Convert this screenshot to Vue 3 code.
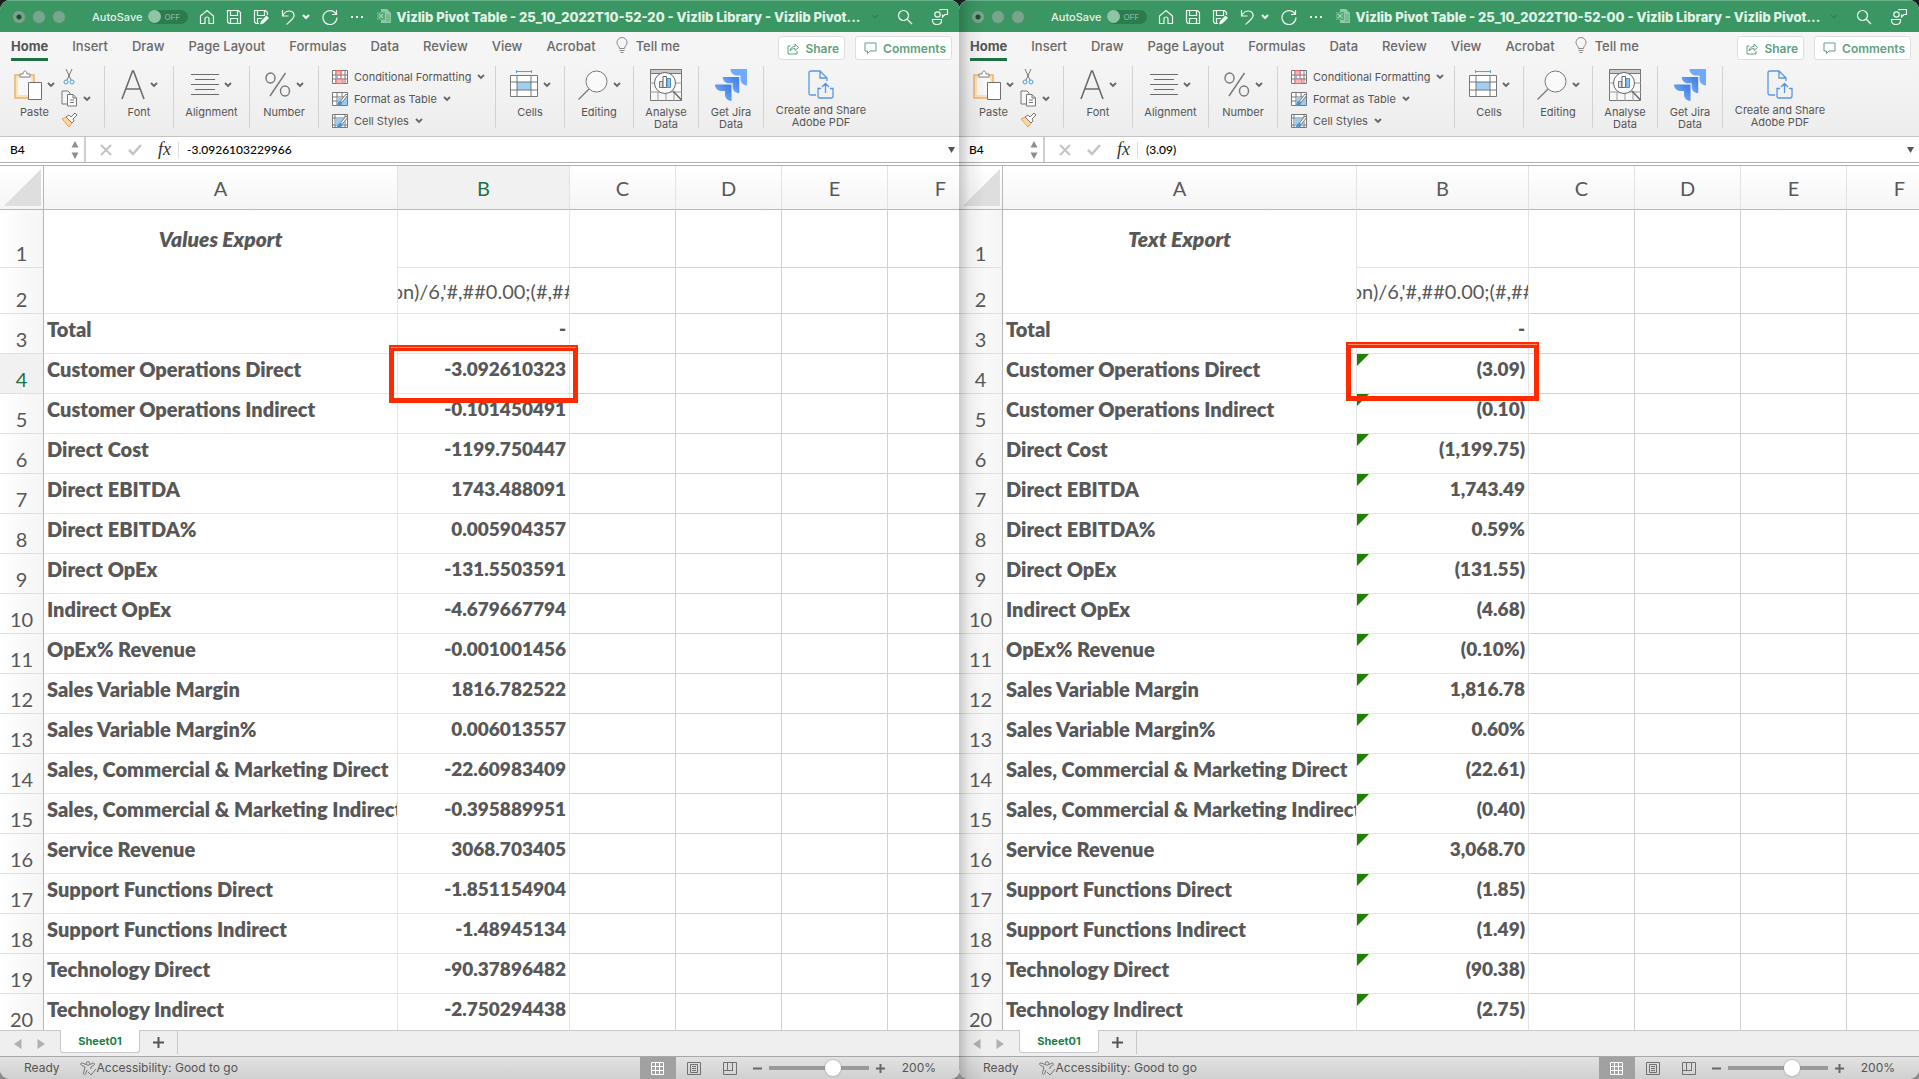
<script setup>
import { ref } from 'vue'

const tabs = ['Home', 'Insert', 'Draw', 'Page Layout', 'Formulas', 'Data', 'Review', 'View', 'Acrobat']
const extraColumns = ['C', 'D', 'E', 'F']

const labels = [
    'Total',
    'Customer Operations Direct',
    'Customer Operations Indirect',
    'Direct Cost',
    'Direct EBITDA',
    'Direct EBITDA%',
    'Direct OpEx',
    'Indirect OpEx',
    'OpEx% Revenue',
    'Sales Variable Margin',
    'Sales Variable Margin%',
    'Sales, Commercial & Marketing Direct',
    'Sales, Commercial & Marketing Indirect',
    'Service Revenue',
    'Support Functions Direct',
    'Support Functions Indirect',
    'Technology Direct',
    'Technology Indirect'
]

const books = ref([
    {
        id: 'values',
        title: 'Vizlib Pivot Table - 25_10_2022T10-52-20 - Vizlib Library - Vizlib Pivot...',
        heading: 'Values Export',
        formula: '-3.0926103229966',
        cell: 'B4',
        zoom: 67,
        active: true,
        values: ['-', '-3.092610323', '-0.101450491', '-1199.750447', '1743.488091', '0.005904357', '-131.5503591', '-4.679667794', '-0.001001456', '1816.782522', '0.006013557', '-22.60983409', '-0.395889951', '3068.703405', '-1.851154904', '-1.48945134', '-90.37896482', '-2.750294438']
    },
    {
        id: 'text',
        title: 'Vizlib Pivot Table - 25_10_2022T10-52-00 - Vizlib Library - Vizlib Pivot...',
        heading: 'Text Export',
        formula: '(3.09)',
        cell: 'B4',
        zoom: 67,
        active: false,
        values: ['-', '(3.09)', '(0.10)', '(1,199.75)', '1,743.49', '0.59%', '(131.55)', '(4.68)', '(0.10%)', '1,816.78', '0.60%', '(22.61)', '(0.40)', '3,068.70', '(1.85)', '(1.49)', '(90.38)', '(2.75)']
    }
])
</script>

<template>
    <main class="desktop">
        <section v-for="book in books" :key="book.id" :class="['window', book.id]">
            <header class="titlebar">
                <div class="lights"><i class="dot"></i><i></i><i></i></div>
                <button class="autosave">AutoSave <span class="toggle"><b></b>OFF</span></button>
                <div class="quick">
                    <button aria-label="Home">
                        <svg width="16" height="16" viewBox="0 0 16 16"><path d="M1.5 7 8 1.5 14.500 7V14.500H10V10a2 2 0 0 0-4 0v4.500H1.500Z" /></svg>
                    </button>
                    <button aria-label="Save">
                        <svg width="16" height="16" viewBox="0 0 16 16"><path d="M1.500 1.500H12.500L14.500 3.500V14.500H3L1.500 13ZM4.500 1.500V6.500H11.500V1.500M4.500 14.500V9.500H11.500V14.500" /></svg>
                    </button>
                    <button aria-label="Save as">
                        <svg width="16" height="16" viewBox="0 0 16 16"><path d="M6 14.500H3L1.500 13V1.500H12.500L14.500 3.500V6M4.500 1.500V6.500H11.500V1.500M4.500 14V9.500H9" /><path class="solid" d="M7 15.500 8 12 13.500 6.500 16 9 10.500 14.500Z" /></svg>
                    </button>
                    <button class="undo" aria-label="Undo">
                        <svg width="16" height="16" viewBox="0 0 16 16"><path d="M2.500 1V7H8.500M2.500 6.800C4 4 6.500 2 9.500 2 13 2 14.800 5 13.800 7.800 13 10 10 12.500 6.500 15.500" /></svg>
                        <svg width="8" height="6" viewBox="0 0 8 6"><path class="thick" d="M1 1 4 4 7 1" /></svg>
                    </button>
                    <button aria-label="Redo">
                        <svg width="18" height="16" viewBox="0 0 18 16"><path d="M15.500 1V5.500H11M15.200 5.300A7 7 0 1 0 16 8.500" /></svg>
                    </button>
                    <button aria-label="More commands">
                        <svg width="14" height="16" viewBox="0 0 14 16"><path class="solid" d="M1 7h2v2H1zM6 7h2v2H6zM11 7h2v2h-2z" /></svg>
                    </button>
                </div>
                <h1>
                    <svg width="15" height="15" viewBox="0 0 15 15"><path fill="#8fc9a8" d="M4 0H10L14 4V14H4Z" /><path stroke="#5ead80" d="M9 6h4M9 8h4M9 10h4M9 12h4" /><path fill="#5ead80" d="M0 3H8V11H0Z" /><path stroke="#a5d5ba" d="M2 5 6 9M6 5 2 9" /></svg>
                    {{ book.title }}
                </h1>
                <div class="tools">
                    <svg class="faint" width="8" height="6" viewBox="0 0 8 6"><path d="M1 1 4 4 7 1" /></svg>
                    <button aria-label="Search">
                        <svg width="16" height="16" viewBox="0 0 16 16"><circle cx="6.500" cy="6.500" r="5" /><path d="M10 10 15 15" /></svg>
                    </button>
                    <button aria-label="Account">
                        <svg width="18" height="18" viewBox="0 0 18 18"><circle cx="6.500" cy="6.500" r="2.700" /><path d="M1.500 11.500H10.500V12.500C10.500 15 8.500 16.500 6 16.500S1.500 15 1.500 12.500ZM9 2.500V1.500H16.500V6.500H14L11.500 9V6.500" /></svg>
                    </button>
                </div>
            </header>

            <nav class="tabs">
                <a v-for="tab in tabs" :key="tab" href="#" :class="{ current: tab === 'Home' }">{{ tab }}</a>
                <a href="#" class="tell">
                    <svg width="12" height="17" viewBox="0 0 12 17"><path d="M3.500 11.500C3.500 9 1 8.500 1 5.500A5 5 0 0 1 11 5.500C11 8.500 8.500 9 8.500 11.500ZM3.500 13.500H8.500M4.500 15.500H7.500" /></svg>
                    Tell me
                </a>
                <div class="sharing">
                    <button>
                        <svg width="12" height="13" viewBox="0 0 12 13"><path d="M3.500 4H1V12H10V9M3 9C3.500 6 5 4.500 8 4.500V2L11.500 5.500 8 8.500V6.500C6 6.500 4.500 7 3 9Z" /></svg>
                        Share
                    </button>
                    <button>
                        <svg width="13" height="13" viewBox="0 0 13 13"><path d="M1 1H12V9H6L3.500 11.500V9H1Z" /></svg>
                        Comments
                    </button>
                </div>
            </nav>

            <div class="ribbon">
                <div class="group paste">
                    <button class="big">
                        <span class="art">
                            <svg width="28" height="30" viewBox="0 0 28 30"><path fill="#f7e4bd" stroke="#f2b06c" stroke-width="1.500" d="M1 5H20V28H1Z" /><path fill="#f7f7f7" d="M4 8H17V25H4Z" /><path fill="#fff" stroke="#858585" d="M6 7V4H9C9 0 13 0 13 4H16V7Z" /><path fill="#fff" stroke="#6e6e6e" d="M14.500 12.500H27.500V29.500H14.500Z" /></svg>
                            <svg class="chev" width="8" height="6" viewBox="0 0 8 6"><path d="M1 1 4 4 7 1" /></svg>
                        </span>
                        Paste
                    </button>
                    <div class="minis">
                        <button aria-label="Cut">
                            <svg width="16" height="16" viewBox="0 0 16 16"><path stroke="#777" d="M5 0 10 11M11 0 6 11" /><circle cx="5" cy="13" r="2" stroke="#4a9fd6" /><circle cx="11" cy="13" r="2" stroke="#4a9fd6" /></svg>
                        </button>
                        <button aria-label="Copy">
                            <svg width="17" height="17" viewBox="0 0 17 17"><path fill="#f6f6f6" stroke="#777" d="M1 1H7L9 3V14H1Z" /><path fill="#fff" stroke="#777" d="M6.500 4.500H12L15.500 8V16H6.500ZM12 4.500V8H15.500M9 10H13M9 12.500H13" /></svg>
                            <svg class="chev" width="8" height="6" viewBox="0 0 8 6"><path d="M1 1 4 4 7 1" /></svg>
                        </button>
                        <button aria-label="Format painter">
                            <svg width="17" height="16" viewBox="0 0 17 16"><path fill="#fbd5a4" stroke="#eda050" d="M1 7 5 5 11 11 8 15Z" /><path fill="#fff" stroke="#777" d="M5 5 8 3 10 5 14 1 16 3 12 7 13 9 11 11Z" /></svg>
                        </button>
                    </div>
                </div>
                <div class="group">
                    <button class="big">
                        <span class="art">
                            <svg width="24" height="30" viewBox="0 0 24 30"><path stroke="#6b6b6b" stroke-width="1.600" d="M1 29 11.500 1H12.500L23 29M5 19H19" /></svg>
                            <svg class="chev" width="8" height="6" viewBox="0 0 8 6"><path d="M1 1 4 4 7 1" /></svg>
                        </span>
                        Font
                    </button>
                </div>
                <div class="group wide">
                    <button class="big">
                        <span class="art">
                            <svg width="28" height="30" viewBox="0 0 28 30"><path stroke="#6b6b6b" d="M0 4.500H28M4 9.500H24M0 14.500H28M4 19.500H24M0 24.500H28" /></svg>
                            <svg class="chev" width="8" height="6" viewBox="0 0 8 6"><path d="M1 1 4 4 7 1" /></svg>
                        </span>
                        Alignment
                    </button>
                </div>
                <div class="group">
                    <button class="big">
                        <span class="art">
                            <svg width="26" height="30" viewBox="0 0 26 30"><g stroke="#777" stroke-width="1.400"><ellipse cx="5.500" cy="8" rx="4.500" ry="5" /><ellipse cx="20" cy="21" rx="4.500" ry="5" /><path d="M20.500 3 5 26" /></g></svg>
                            <svg class="chev" width="8" height="6" viewBox="0 0 8 6"><path d="M1 1 4 4 7 1" /></svg>
                        </span>
                        Number
                    </button>
                </div>
                <div class="group styles">
                    <button>
                        <svg width="16" height="14" viewBox="0 0 16 14"><path fill="#fff" stroke="#777" d="M.5.500H15.500V13.500H.5ZM.5 5H15.500M.5 9H15.500M4 0V14M9 0V14M13 0V14" /><path fill="#f9b4b4" stroke="#e36a6a" d="M4 .500H9V5H4ZM4 9H11V13.500H4Z" /><path fill="#77b9e8" d="M4 5.500H6V8.500H4Z" /></svg>
                        Conditional Formatting
                        <svg class="chev" width="8" height="6" viewBox="0 0 8 6"><path d="M1 1 4 4 7 1" /></svg>
                    </button>
                    <button>
                        <svg width="16" height="14" viewBox="0 0 16 14"><path fill="#fff" stroke="#777" d="M.5.500H15.500V13.500H.5ZM.5 5H15.500M.5 9H15.500M5 0V14M10 0V14" /><path fill="#9dcbf0" d="M5.500 5H15V13H5.500Z" /><path fill="#4d94cf" d="M4 14C6 13 5 9 8.500 9L10 11C10 14 7 14 4 14Z" /><path fill="#fff" stroke="#777" d="M8.500 9 14 2 15.500 3.500 10 10.500Z" /></svg>
                        Format as Table
                        <svg class="chev" width="8" height="6" viewBox="0 0 8 6"><path d="M1 1 4 4 7 1" /></svg>
                    </button>
                    <button>
                        <svg width="16" height="14" viewBox="0 0 16 14"><path fill="#fff" stroke="#777" d="M.5.500H15.500V13.500H.5ZM.5 4H15.500M.5 11H15.500M3 0V14M13 0V14" /><path fill="#9dcbf0" d="M3.500 4.500H12.500V11H3.500Z" /><path fill="#4d94cf" d="M4 14C6 13 5 9 8.500 9L10 11C10 14 7 14 4 14Z" /><path fill="#fff" stroke="#777" d="M8.500 9 14 2 15.500 3.500 10 10.500Z" /></svg>
                        Cell Styles
                        <svg class="chev" width="8" height="6" viewBox="0 0 8 6"><path d="M1 1 4 4 7 1" /></svg>
                    </button>
                </div>
                <div class="group">
                    <button class="big">
                        <span class="art">
                            <svg width="28" height="30" viewBox="0 0 28 30"><path stroke="#52a5dc" d="M6.500 0V3M21.500 0V3M6.500 1.500H21.500" /><path fill="#fff" stroke="#777" d="M.5 5.500H27.500V26.500H.5Z" /><path fill="#9fd0f3" d="M7 12H21V20H7Z" /><path stroke="#777" d="M.5 12H27.500M.5 20H27.500M7 5.500V26.500M21 5.500V26.500" /></svg>
                            <svg class="chev" width="8" height="6" viewBox="0 0 8 6"><path d="M1 1 4 4 7 1" /></svg>
                        </span>
                        Cells
                    </button>
                </div>
                <div class="group">
                    <button class="big">
                        <span class="art">
                            <svg width="30" height="30" viewBox="0 0 30 30"><circle cx="18.500" cy="11.500" r="10.500" fill="#fafafa" stroke="#777" /><path stroke="#777" stroke-width="1.300" d="M11 19 .5 29.500" /></svg>
                            <svg class="chev" width="8" height="6" viewBox="0 0 8 6"><path d="M1 1 4 4 7 1" /></svg>
                        </span>
                        Editing
                    </button>
                </div>
                <div class="group narrow">
                    <button class="big">
                        <span class="art">
                            <svg width="32" height="32" viewBox="0 0 32 32"><path fill="#f8f8f8" stroke="#777" d="M.5.500H31.500V31.500H.5Z" /><path fill="#c9c9c9" stroke="#777" d="M.5.500H31.500V4.500H.5Z" /><path stroke="#999" d="M0 14H32M0 23H32M8 23V32M16 23V32M24 23V32" /><circle cx="15" cy="14" r="10.500" fill="#fff" stroke="#666" /><path stroke="#666" stroke-width="1.500" d="M23 22 31.500 31" /><path fill="#ddd" stroke="#777" d="M9.500 12.500H13V18.500H9.500Z" /><path fill="#fff" stroke="#666" d="M13 7.500H16.500V18.500H13Z" /><path fill="#8cc6ef" stroke="#4c91c7" d="M17 9.500H20.500V18.500H17Z" /></svg>
                        </span>
                        Analyse<br>Data
                    </button>
                </div>
                <div class="group narrow">
                    <button class="big">
                        <span class="art">
                            <svg width="32" height="32" viewBox="0 0 32 32">
                                <defs><linearGradient :id="book.id + '-jira'" x1="1" y1="0" x2="0" y2="1"><stop offset=".2" stop-color="#4a85e6" /><stop offset=".7" stop-color="#70aaff" /></linearGradient></defs>
                                <path fill="#70aaff" d="M15.500 0H32V16.500C28 16 25.500 13.500 25.500 10V6.500H22C18.500 6.500 15.500 4 15.500 0Z" />
                                <path :fill="`url(#${book.id}-jira)`" d="M7.700 8H24.200V24.300C20 24 17.700 21 17.700 18V14.300H14C10.500 14.300 8 12 7.700 8Z" />
                                <path :fill="`url(#${book.id}-jira)`" d="M0 15.500H16.500V32C12.500 31.500 10 29 10 25.500V22H6.500C3 22 0 19.500 0 15.500Z" />
                            </svg>
                        </span>
                        Get Jira<br>Data
                    </button>
                </div>
                <div class="group pdf">
                    <button class="big">
                        <span class="art">
                            <svg width="26" height="30" viewBox="0 0 26 30"><g stroke="#5696ea" stroke-width="1.300"><path d="M8 26H3Q1 26 1 24V4Q1 2 3 2H12L19 9V12M12 2V9H19M13 19.500H10V27Q10 29 12 29H23Q25 29 25 27V19.500H22M17.500 24V14.500M14 18 17.500 14.500 21 18" /></g></svg>
                        </span>
                        Create and Share<br>Adobe PDF
                    </button>
                </div>
            </div>

            <div class="formula-bar">
                <div class="name-box">
                    <input v-model="book.cell" aria-label="Name box">
                    <svg width="8" height="18" viewBox="0 0 8 18"><path fill="#8e8e8e" d="M4 0 7.500 6.500H.5ZM4 18 .5 11.500H7.500Z" /></svg>
                </div>
                <button aria-label="Cancel"><svg width="12" height="12" viewBox="0 0 12 12"><path stroke="#c4c4c4" stroke-width="2" d="M1 1 11 11M11 1 1 11" /></svg></button>
                <button aria-label="Enter"><svg width="14" height="12" viewBox="0 0 14 12"><path stroke="#c4c4c4" stroke-width="2.500" d="M1 6 5 10 13 1" /></svg></button>
                <button class="fx">fx</button>
                <input v-model="book.formula" class="formula" aria-label="Formula">
                <svg class="expand" width="8" height="6" viewBox="0 0 8 6"><path fill="#555" d="M0 0H7L3.500 6Z" /></svg>
            </div>

            <div class="sheet">
                <table>
                    <colgroup>
                        <col class="c-num"><col class="c-a"><col class="c-b">
                        <col v-for="col in extraColumns" :key="col" class="c-x">
                    </colgroup>
                    <thead>
                        <tr>
                            <th class="corner"><svg width="37" height="37" viewBox="0 0 37 37"><path fill="#dedede" d="M37 0V37H0Z" /></svg></th>
                            <th>A</th>
                            <th :class="{ selected: book.active }">B</th>
                            <th v-for="col in extraColumns" :key="col">{{ col }}</th>
                        </tr>
                    </thead>
                    <tbody>
                        <tr class="row-one">
                            <th>1</th>
                            <td rowspan="2" class="pale heading">{{ book.heading }}</td>
                            <td class="pale"></td>
                            <td v-for="col in extraColumns" :key="col"></td>
                        </tr>
                        <tr class="row-two">
                            <th>2</th>
                            <td class="pale"><div class="clipped"><span>on)/6,'#,##0.00;(#,##</span></div></td>
                            <td v-for="col in extraColumns" :key="col"></td>
                        </tr>
                        <tr v-for="(label, i) in labels" :key="label">
                            <th :class="{ selected: book.active && i === 1 }">{{ i + 3 }}</th>
                            <td class="pale label"><div>{{ label }}</div></td>
                            <td :class="['pale', 'value', { flagged: !book.active && i > 0 }]">
                                {{ book.values[i] }}
                                <span v-if="i === 1" class="marker"></span>
                            </td>
                            <td v-for="col in extraColumns" :key="col"></td>
                        </tr>
                    </tbody>
                </table>
            </div>

            <div class="sheet-tabs">
                <button aria-label="Previous sheet"><svg width="8" height="10" viewBox="0 0 8 10"><path fill="#b0b0b0" d="M7.500 0V10L0 5Z" /></svg></button>
                <button aria-label="Next sheet"><svg width="8" height="10" viewBox="0 0 8 10"><path fill="#b0b0b0" d="M.5 0V10L8 5Z" /></svg></button>
                <button class="sheet-name">Sheet01</button>
                <button class="add" aria-label="Add sheet"><svg width="11" height="11" viewBox="0 0 11 11"><path stroke="#555" stroke-width="2" d="M5.500 0V11M0 5.500H11" /></svg></button>
            </div>

            <footer class="status">
                <span class="ready">Ready</span>
                <svg width="17" height="15" viewBox="0 0 17 15"><g stroke="#777"><circle cx="8" cy="2.500" r="1.800" /><path d="M6 3.500 2 2C0 2 0 4 2 4.500L5 6 3.500 12C3.500 14 5.500 14 6 12L7 9M10 3.500 13 2C15 2 15 4 13 4.500L11 6V8M8 11 11 14 16 8" /></g></svg>
                <span>Accessibility: Good to go</span>
                <div class="views">
                    <button class="on" aria-label="Normal view"><svg width="13" height="13" viewBox="0 0 13 13"><path stroke="#fff" d="M.5.500H12.500V12.500H.5ZM.5 4.500H12.500M.5 8.500H12.500M4.500 0V13M8.500 0V13" /></svg></button>
                    <button aria-label="Page layout view"><svg width="14" height="13" viewBox="0 0 14 13"><path stroke="#707070" d="M.5.500H13.500V12.500H.5ZM3.500 2.500H10.500V10.500H3.500ZM5 4.500H9M5 6.500H9M5 8.500H9" /></svg></button>
                    <button aria-label="Page break view"><svg width="14" height="13" viewBox="0 0 14 13"><path stroke="#707070" d="M.5.500H13.500V12.500H.5ZM4.500 0V8M9.500 0V8M0 8.500H10" /></svg></button>
                </div>
                <button aria-label="Zoom out"><svg width="9" height="9" viewBox="0 0 9 9"><path stroke="#666" stroke-width="2" d="M0 4.500H9" /></svg></button>
                <input v-model="book.zoom" type="range" min="0" max="100" aria-label="Zoom">
                <button aria-label="Zoom in"><svg width="9" height="9" viewBox="0 0 9 9"><path stroke="#666" stroke-width="2" d="M0 4.500H9M4.500 0V9" /></svg></button>
                <span class="percent">200%</span>
            </footer>
        </section>
    </main>
</template>

<style>
body {
    margin: 0;
    background: linear-gradient(#1d1d1d, #8c8c8c);
}
</style>

<style scoped>
* {
    box-sizing: border-box;
}

.desktop {
    display: flex;
    height: 100vh;
    overflow: hidden;
    font-family: Inter, "Liberation Sans", sans-serif;
    font-size: 12px;
    color: #555;
}

.window {
    position: relative;
    flex: 1;
    min-width: 0;
    display: flex;
    flex-direction: column;
    background: #fff;
    border-radius: 10px;
    overflow: hidden;
}

.window.text {
    margin-left: -1px;
}

/* shadow cast by the window in front */
.window.text::after {
    content: "";
    position: absolute;
    inset: 0 auto 0 0;
    width: 26px;
    background: linear-gradient(90deg, rgba(0, 0, 0, .2), rgba(0, 0, 0, .06) 40%, transparent);
    pointer-events: none;
}

button {
    display: flex;
    align-items: center;
    padding: 0;
    border: 0;
    background: none;
    font: inherit;
    color: inherit;
}

svg {
    display: block;
    flex: none;
    fill: none;
}

.titlebar {
    display: flex;
    align-items: center;
    height: 32px;
    flex: none;
    padding: 0 11px 0 12px;
    background: #3a9662;
    border-top: 1px solid #68b189;
    color: #e2f3e9;
}

.titlebar .quick svg,
.titlebar .tools svg {
    stroke: #f0f8f3;
    stroke-width: 1.2;
}

.lights {
    display: flex;
    gap: 6px;
    margin-right: 26px;
}

.lights i {
    width: 14px;
    height: 14px;
    border-radius: 50%;
    background: #76a68c;
    border: 1px solid #568a6d;
}

.lights .dot {
    background: radial-gradient(circle, #1d4a32 2px, #76a68c 3px);
}

.autosave {
    gap: 6px;
    font-size: 11px;
    font-weight: 500;
}

.toggle {
    display: flex;
    align-items: center;
    gap: 3px;
    width: 40px;
    height: 14px;
    border-radius: 7px;
    background: #2c7b4e;
    font-size: 8px;
    color: #7fba99;
}

.toggle b {
    width: 13px;
    height: 13px;
    border-radius: 50%;
    background: #8fc5a7;
}

.quick {
    display: flex;
    gap: 11px;
    margin-left: 11px;
}

.undo {
    gap: 6px;
}

.solid {
    fill: #f0f8f3;
    stroke: none;
}

.thick {
    stroke-width: 2;
}

h1 {
    display: flex;
    align-items: center;
    gap: 4px;
    flex: 1;
    min-width: 0;
    margin: 0 0 0 13px;
    font-size: 13px;
    font-weight: 800;
    white-space: nowrap;
}

.tools {
    display: flex;
    align-items: center;
    gap: 18px;
}

.tools svg.faint {
    stroke: #2f8052;
}

.tabs {
    display: flex;
    align-items: center;
    gap: 24px;
    height: 30px;
    flex: none;
    padding: 0 8px 0 11px;
    background: #f5f5f5;
    font-size: 13px;
    font-weight: 500;
}

.tabs a {
    display: flex;
    align-items: center;
    height: 28px;
    color: #696969;
    text-decoration: none;
    white-space: nowrap;
    border-bottom: 3px solid transparent;
}

.tabs .current {
    font-weight: 700;
    color: #555;
    border-color: #1e7145;
}

.tabs .tell {
    gap: 8px;
    margin-left: -4px;
}

.tell svg {
    stroke: #888;
}

.sharing {
    display: flex;
    gap: 10px;
    margin-left: auto;
}

.sharing button {
    height: 24px;
    gap: 6px;
    padding: 0 5px 0 8px;
    margin-top: 2px;
    background: #fff;
    border: 1px solid #dedede;
    border-radius: 3px;
    font-size: 12px;
    font-weight: 600;
    color: #5fa17f;
}

.sharing svg {
    stroke: #5fa17f;
}

.ribbon {
    display: flex;
    flex: none;
    height: 75px;
    padding: 4px 0 8px;
    background: linear-gradient(#f5f5f5, #ededed);
    border-bottom: 1px solid #c4c4c4;
    font-size: 11px;
}

.group {
    display: flex;
    justify-content: center;
    width: 69px;
    border-right: 1px solid #d2d2d2;
}

.group.wide {
    width: 76px;
}

.group.narrow {
    width: 65px;
}

.group.pdf {
    width: 114px;
    border: 0;
}

.group.paste {
    justify-content: flex-start;
    width: 105px;
    padding-left: 14px;
}

.big {
    flex-direction: column;
    justify-content: flex-start;
    line-height: 12px;
    text-align: center;
    white-space: nowrap;
}

.art {
    display: flex;
    align-items: center;
    gap: 5px;
    height: 32px;
    margin: 3px 0 5px;
}

.chev {
    stroke: #666;
    stroke-width: 1.8;
}

.minis {
    display: flex;
    flex-direction: column;
    gap: 5px;
    padding-top: 3px;
    margin-left: 6px;
}

.minis button {
    gap: 5px;
}

.styles {
    width: 177px;
    flex-direction: column;
    justify-content: flex-start;
    gap: 8px;
    padding: 4px 0 0 13px;
}

.styles button {
    gap: 6px;
    height: 14px;
    white-space: nowrap;
}

.formula-bar {
    display: flex;
    align-items: center;
    flex: none;
    height: 29px;
    padding-right: 4px;
    background: #fff;
    border-bottom: 4px double #b0b0b0;
    color: #000;
}

.formula-bar input {
    min-width: 0;
    padding: 0;
    border: 0;
    background: none;
    font: 500 12px Lato, sans-serif;
    color: #000;
}

.name-box {
    display: flex;
    align-items: center;
    justify-content: space-between;
    align-self: stretch;
    width: 86px;
    padding: 0 5px 0 10px;
    margin-right: 14px;
    border-right: 2px solid #cfcfcf;
}

.name-box input {
    width: 50px;
}

.formula-bar button {
    margin-right: 16px;
}

.formula-bar .fx {
    margin-right: 7px;
    font: italic 18px "Liberation Serif", serif;
    color: #333;
}

.formula-bar .formula {
    flex: 1;
    height: 16px;
    padding-left: 8px;
    border-left: 1px solid #dcdcdc;
}

.sheet {
    flex: 1;
    min-height: 0;
    overflow: hidden;
}

table {
    table-layout: fixed;
    width: 994px;
    border-spacing: 0;
    font-family: Lato, sans-serif;
    font-size: 20px;
    line-height: 30px;
    color: #585858;
}

.c-num {
    width: 44px;
}

.c-a {
    width: 354px;
}

.c-b {
    width: 172px;
}

.c-x {
    width: 106px;
}

th,
td {
    height: 40px;
    padding: 0;
    border-right: 1px solid #d2d2d2;
    border-bottom: 1px solid #d2d2d2;
    vertical-align: top;
}

thead th {
    height: 44px;
    background: linear-gradient(#fff, #f5f5f5);
    border-right-color: #e2e2e2;
    border-bottom-color: #b8b8b8;
    font-weight: 400;
    vertical-align: middle;
}

thead .corner {
    border-right-color: #b8b8b8;
}

.corner svg {
    margin-left: 4px;
}

tbody th {
    padding-bottom: 2px;
    background: linear-gradient(90deg, #fff, #f5f5f5);
    border-right-color: #b8b8b8;
    border-bottom-color: #e0e0e0;
    font-weight: 400;
    line-height: 24px;
    vertical-align: bottom;
}

th.selected {
    background: #f1f1f1;
    color: #1e7145;
}

.pale {
    border-color: #e4e4e4;
}

.row-one > * {
    height: 58px;
}

.row-two > * {
    height: 46px;
}

.heading {
    padding-top: 14px;
    font-size: 21px;
    font-weight: 800;
    font-style: italic;
    text-align: center;
}

.clipped {
    display: flex;
    justify-content: center;
    padding-top: 8px;
    overflow: hidden;
    white-space: nowrap;
}

.label {
    font-weight: 800;
}

.label div {
    padding-left: 3px;
    overflow: hidden;
    white-space: nowrap;
}

.value {
    position: relative;
    padding-right: 3px;
    font-size: 19px;
    font-weight: 800;
    text-align: right;
}

.flagged::before {
    content: "";
    position: absolute;
    top: 0;
    left: 0;
    border-top: 12px solid #1e8000;
    border-right: 12px solid transparent;
}

.marker {
    position: absolute;
    z-index: 1;
    inset: -9px -9px -10px;
    border: 5px solid #ff2a00;
    border-top-width: 6px;
}

.marker::before {
    content: "";
    position: absolute;
    inset: -4px -3px auto;
    height: 1px;
    background: #ff8a70;
}

.text .marker {
    inset: -12px -11px -8px;
}

.sheet-tabs {
    display: flex;
    flex: none;
    height: 26px;
    padding-left: 14px;
    background: #efefef;
    border-top: 1px solid #c8c8c8;
}

.sheet-tabs button {
    margin-right: 15px;
}

.sheet-tabs .sheet-name {
    justify-content: center;
    width: 80px;
    height: 23px;
    margin: -1px 0 0;
    background: #fff;
    border: 1px solid #c8c8c8;
    border-top: 0;
    border-radius: 0 0 3px 3px;
    font-size: 11px;
    font-weight: 700;
    color: #1e8048;
}

.sheet-tabs .add {
    justify-content: center;
    width: 38px;
    height: 23px;
    margin: 0;
    border-right: 1px solid #c8c8c8;
}

.status {
    display: flex;
    align-items: center;
    flex: none;
    height: 23px;
    padding-right: 24px;
    background: linear-gradient(#e2e2e2, #d0d0d0);
    border-top: 1px solid #a8a8a8;
    line-height: 21px;
}

.status > span {
    align-self: flex-start;
}

.ready {
    margin: 0 20px 0 24px;
}

.views {
    display: flex;
    align-self: stretch;
    margin: 0 5px 0 auto;
}

.views button {
    justify-content: center;
    width: 36px;
}

.views .on {
    background: #a1a1a1;
}

.status input {
    appearance: none;
    width: 100px;
    height: 16px;
    margin: 0 7px;
    background: linear-gradient(#999, #999) center / 100% 4px no-repeat;
}

.status input::-webkit-slider-thumb {
    appearance: none;
    width: 16px;
    height: 16px;
    border-radius: 50%;
    background: #fff;
    box-shadow: 0 0 2px #888;
}

.percent {
    margin-left: 17px;
}
</style>
